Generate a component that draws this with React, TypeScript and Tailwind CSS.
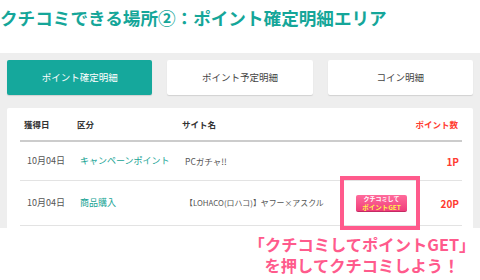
const jp = { fontFamily: '"Noto Sans CJK JP", "Noto Sans", sans-serif' };

const Tab = ({ label, active }: { label: string; active?: boolean }) => (
  <div
    className={
      "flex h-[35px] w-[146px] items-center justify-center rounded-[2px] text-[9.5px] shadow-[0_1px_1px_rgba(0,0,0,0.12)] " +
      (active ? "bg-[#15a89c] text-white" : "bg-white text-[#444]")
    }
  >
    {label}
  </div>
);

const PostButton = () => (
  <div className="relative w-[51px]">
    <div className="flex h-[17px] w-[51px] flex-col items-center justify-center rounded-[2px] border-b border-[#c42a62] bg-gradient-to-b from-[#ff6a9b] to-[#f03d7c] font-bold">
      <div className="h-[8px] text-[6px] leading-[8px] text-white">クチコミして</div>
      <div className="h-[8px] text-[6.5px] leading-[8px] text-[#fff34a]">ポイントGET</div>
    </div>
    <div className="absolute -left-[16px] -top-[19px] h-[54px] w-[80px] border-4 border-[#ff5a8c]" />
  </div>
);

export default function App() {
  return (
    <div className="h-[280px] w-[480px] overflow-hidden bg-white" style={jp}>
      <div className="flex h-[53px] items-start pt-[4px]">
        <h1 className="text-[17.6px] font-bold leading-[28px] text-[#15a699]">
          クチコミできる場所②：ポイント確定明細エリア
        </h1>
      </div>

      <div className="bg-[#eeeeee] px-[7px] pt-[7px]">
        <div className="flex gap-[15px]">
          <Tab label="ポイント確定明細" active />
          <Tab label="ポイント予定明細" />
          <Tab label="コイン明細" />
        </div>

        <div className="mt-[13px] rounded-t-[2px] bg-white pl-[13px] pr-[11px] pb-[2px]">
          <div className="flex h-[34px] items-center border-b-2 border-[#cccccc] pl-[4px] pr-[4px] text-[8.5px] font-bold text-[#333]">
            <div className="w-[53px]">獲得日</div>
            <div className="w-[105px]">区分</div>
            <div className="flex-1">サイト名</div>
            <div className="text-[#ff3b30]">ポイント数</div>
          </div>

          <div className="flex h-[39px] items-center border-b border-[#e3e3e3] pl-[7px] pr-[3px] text-[9px] text-[#555]">
            <div className="w-[53px]">10月04日</div>
            <div className="w-[105px] text-[#16a394]">キャンペーンポイント</div>
            <div className="flex-1 text-[8.5px]">PCガチャ!!</div>
            <div className="w-[51px]" />
            <div className="w-[52px] text-right text-[10px] font-bold text-[#ff3b30]">1P</div>
          </div>

          <div className="flex h-[45px] items-center border-b border-[#e3e3e3] pl-[7px] pr-[3px] text-[9px] text-[#555]">
            <div className="w-[53px]">10月04日</div>
            <div className="w-[105px] text-[#16a394]">商品購入</div>
            <div className="flex-1 whitespace-nowrap text-[7.9px]">【LOHACO(ロハコ)】ヤフー×アスクル</div>
            <PostButton />
            <div className="w-[52px] text-right text-[10px] font-bold text-[#ff3b30]">20P</div>
          </div>
        </div>
      </div>

      <div className="ml-[242px] mt-[6px] w-[240px] text-center text-[16.3px] font-bold leading-[20px] text-[#ff5a8c]">
        <div>「クチコミしてポイントGET」</div>
        <div className="mt-[1px]">を押してクチコミしよう！</div>
      </div>
    </div>
  );
}
